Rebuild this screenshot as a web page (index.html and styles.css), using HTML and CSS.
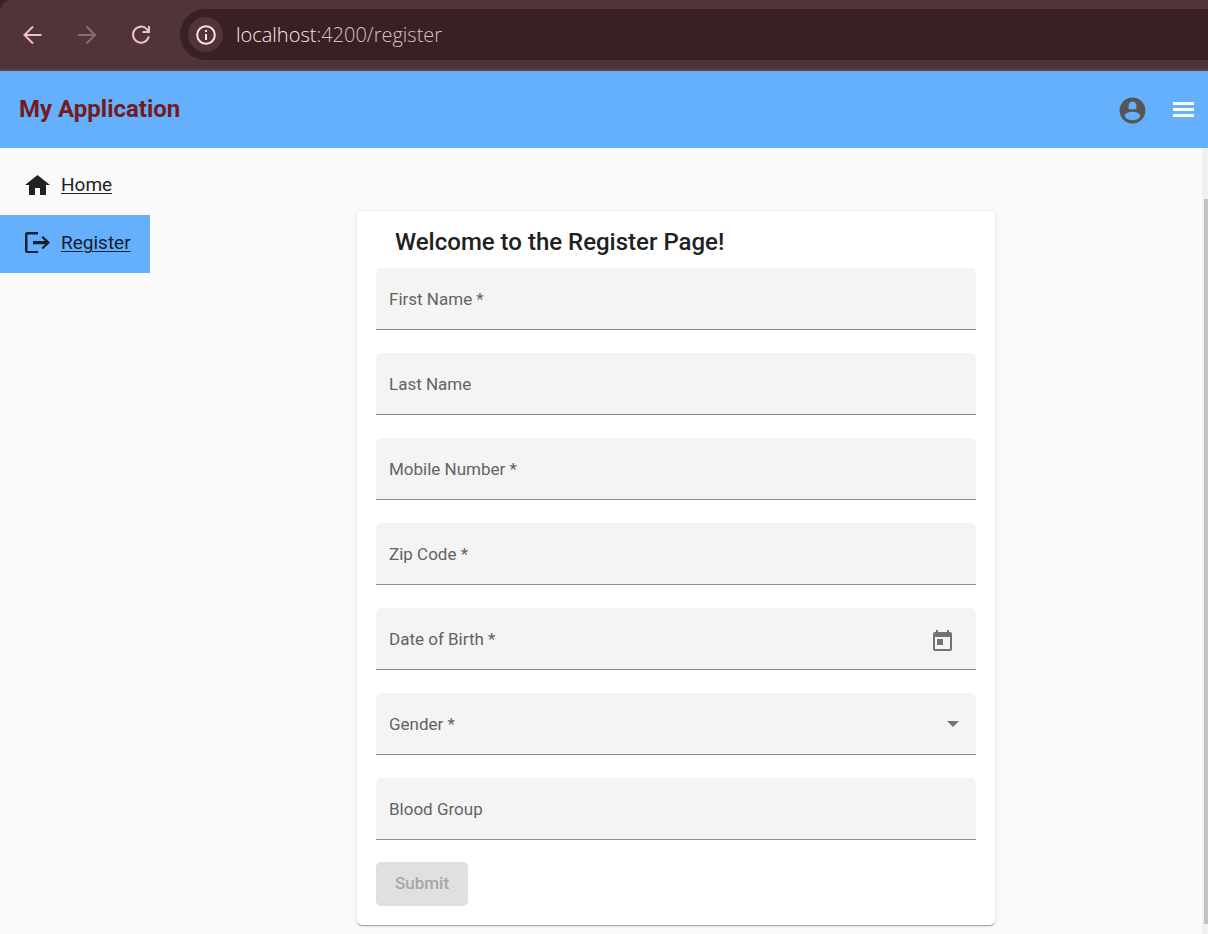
FILE: index.html
```html
<!DOCTYPE html>
<html lang="en">
<head>
<meta charset="utf-8">
<meta name="viewport" content="width=device-width, initial-scale=1">
<title>My Application</title>
<link rel="stylesheet" href="styles.css">
</head>
<body>
<div class="frame">
  <div class="browser">
    <button class="browser-btn" type="button" aria-label="Back">
      <svg viewBox="0 0 20 20" width="20" height="20"><path d="M18.500 10H2M10 1.500L1.500 10l8.500 8.500"/></svg>
    </button>
    <button class="browser-btn browser-btn-dim" type="button" aria-label="Forward">
      <svg viewBox="0 0 20 20" width="20" height="20"><path d="M1 10h16.500M9.500 1.500L18 10l-8.500 8.500"/></svg>
    </button>
    <button class="browser-btn" type="button" aria-label="Reload">
      <svg viewBox="0 0 20 20" width="20" height="20"><path d="M17.800 11.500a8 8 0 1 1-1.800-7.200L18 6.500M18 1v6h-6.500"/></svg>
    </button>
    <div class="address">
      <button class="site-info" type="button" aria-label="Site information">
        <svg viewBox="0 0 20 20" width="20" height="20"><circle cx="10" cy="10" r="8.800"/><path d="M10 9v6M10 5v2"/></svg>
      </button>
      <span class="url"><span class="url-host">localhost</span>:4200/register</span>
    </div>
  </div>

  <header class="topbar">
    <h1 class="brand">My Application</h1>
    <div class="topbar-actions">
      <button class="icon-btn account" type="button" aria-label="Account">
        <svg viewBox="0 0 24 24" width="31" height="31"><path d="M12 2C6.480 2 2 6.480 2 12s4.480 10 10 10 10-4.480 10-10S17.520 2 12 2zm0 3c1.660 0 3 1.340 3 3v3H9V8c0-1.660 1.340-3 3-3zm0 14.500c-3.100 0-6-1.500-6-3.600 0-1.900 3.600-2.900 6-2.900s6 1 6 2.900c0 2.100-2.900 3.600-6 3.600z"/></svg>
      </button>
      <button class="icon-btn menu" type="button" aria-label="Menu">
        <svg viewBox="0 0 21 15" width="21" height="15"><path d="M0 0h21v3H0zM0 6h21v3H0zM0 12h21v3H0z"/></svg>
      </button>
    </div>
  </header>

  <div class="workspace">
    <nav class="sidenav" aria-label="Main">
      <a class="nav-link" href="#home">
        <svg viewBox="0 0 25 22" width="25" height="22"><path d="M10 21v-7h5v7h6V11h4L12.500 1 0 11h4v10z"/></svg>
        <span>Home</span>
      </a>
      <a class="nav-link nav-link-active" href="#register" aria-current="page">
        <svg viewBox="0 0 25 22" width="25" height="22"><path d="M13 0H2.500Q0 0 0 2.500v16Q0 21 2.500 21H13v-2H2.500V2.500H13zM18 4l-1.500 1.600L20 9H8v3.200h12l-3.500 3.500L18 17.300l7-6.700z"/></svg>
        <span>Register</span>
      </a>
    </nav>

    <main class="content">
      <form class="card">
        <h2 class="card-title">Welcome to the Register Page!</h2>
        <div class="fields">
          <div class="field">
            <label class="field-label" for="first">First Name *</label>
            <input class="field-input" id="first" type="text" required>
          </div>
          <div class="field">
            <label class="field-label" for="last">Last Name</label>
            <input class="field-input" id="last" type="text">
          </div>
          <div class="field">
            <label class="field-label" for="mobile">Mobile Number *</label>
            <input class="field-input" id="mobile" type="tel" required>
          </div>
          <div class="field">
            <label class="field-label" for="zip">Zip Code *</label>
            <input class="field-input" id="zip" type="text" required>
          </div>
          <div class="field">
            <label class="field-label" for="dob">Date of Birth *</label>
            <input class="field-input" id="dob" type="text" required>
            <button class="icon-btn calendar" type="button" aria-label="Open calendar">
              <svg viewBox="0 0 19 21" width="19" height="21"><path d="M17 2h-1V0h-2v2H5V0H3v2H2Q0 2 0 4v15q0 2 2 2h15q2 0 2-2V4q0-2-2-2zm0 17H2V7h15zM4 9h6v6H4z"/></svg>
            </button>
          </div>
          <div class="field">
            <label class="field-label" for="gender">Gender *</label>
            <select class="field-input" id="gender" required>
              <option value="" selected></option>
              <option value="f">Female</option>
              <option value="m">Male</option>
            </select>
            <svg class="arrow" viewBox="0 0 12 6" width="12" height="6"><path d="M0 0h12L6 6z"/></svg>
          </div>
          <div class="field">
            <label class="field-label" for="blood">Blood Group</label>
            <input class="field-input" id="blood" type="text">
          </div>
        </div>
        <button class="submit" type="submit" disabled>Submit</button>
      </form>
    </main>

    <div class="scroll-track" aria-hidden="true"><div class="scroll-thumb"></div></div>
  </div>
</div>
</body>
</html>
```
FILE: styles.css
```css
* { box-sizing: border-box; }

body {
  margin: 0;
  background: #fafafa;
  color: #212121;
  font-family: Roboto, "Liberation Sans", sans-serif;
}

button {
  padding: 0;
  border: 0;
  background: none;
  font-family: inherit;
}

svg { display: block; fill: currentColor; }

.frame {
  display: flex;
  flex-direction: column;
  min-height: 100vh;
  background: linear-gradient(#382024 0 16px, transparent 16px);
}

/* Browser toolbar */
.browser {
  display: flex;
  align-items: center;
  gap: 34px;
  height: 71px;
  padding-left: 23px;
  border-bottom: 2px solid #5c4445;
  border-top-left-radius: 12px;
  background: #513439;
}

.browser-btn { color: #f0c0c8; }
.browser-btn-dim { color: #8c6d72; }

.browser-btn svg,
.site-info svg {
  fill: none;
  stroke: currentColor;
  stroke-width: 2;
}

.address {
  display: flex;
  flex: 1;
  align-items: center;
  gap: 13px;
  height: 51px;
  margin-left: -5px;
  padding-left: 8px;
  border-radius: 26px 0 0 26px;
  background: #382024;
}

.site-info {
  display: grid;
  place-items: center;
  width: 35px;
  height: 35px;
  border-radius: 50%;
  background: #513439;
  color: #fbe4e6;
}

.url {
  color: #d6c2c4;
  font-family: "Open Sans", "Noto Sans", sans-serif;
  font-size: 20px;
  font-weight: 300;
  line-height: 28px;
}

.url-host { color: #fbe8ea; }

/* Application bar */
.topbar {
  display: flex;
  align-items: center;
  justify-content: space-between;
  height: 77px;
  padding: 0 14px 0 19px;
  background: #64b0fc;
}

.brand {
  margin: 0;
  padding-bottom: 2px;
  color: #731b1e;
  font-size: 24px;
  font-weight: 700;
  line-height: 32px;
}

.topbar-actions { display: flex; align-items: center; gap: 25px; }
.account { padding-top: 1px; color: #555; }
.menu { color: #fff; }

/* Page body */
.workspace { display: flex; flex: 1; }

.sidenav { width: 150px; padding-top: 9px; }

.nav-link {
  display: flex;
  align-items: center;
  gap: 11px;
  height: 58px;
  padding: 0 0 2px 25px;
  color: #212121;
  font-size: 19px;
  line-height: 28px;
  text-decoration-thickness: 1px;
  text-underline-offset: 2px;
}

.nav-link-active { background: #64b0fc; color: #14202c; }

.content {
  flex: 1;
  min-width: 0;
  padding: 63px 19px 9px;
}

.card {
  max-width: 638px;
  margin: 0 auto;
  padding: 15px 19px 19px;
  border-radius: 5px;
  background: #fff;
  box-shadow: 0 2px 1px -1px rgba(0, 0, 0, .2), 0 1px 1px rgba(0, 0, 0, .14), 0 1px 4px rgba(0, 0, 0, .12);
}

.card-title {
  margin: 0 0 10px;
  padding-left: 19px;
  font-size: 24px;
  font-weight: 500;
  line-height: 32px;
}

.fields { display: grid; gap: 23px; }

.field {
  display: grid;
  grid-template-columns: 1fr auto;
  align-items: center;
  height: 62px;
  border-bottom: 1px solid #8c8c8c;
  border-radius: 5px 5px 0 0;
  background: #f4f4f4;
}

.field-label {
  grid-area: 1 / 1;
  z-index: 1;
  padding: 0 13px;
  color: #636363;
  font-size: 17px;
  line-height: 24px;
  pointer-events: none;
}

.field-input {
  grid-area: 1 / 1 / 2 / 3;
  width: 100%;
  height: 100%;
  padding: 0 13px;
  border: 0;
  background: none;
  color: inherit;
  font: inherit;
  outline: 0;
  appearance: none;
}

.calendar {
  grid-area: 1 / 2;
  z-index: 1;
  margin-right: 24px;
  padding-top: 4px;
  color: #737373;
}

.arrow {
  grid-area: 1 / 2;
  margin-right: 17px;
  color: #737373;
  pointer-events: none;
}

.submit {
  display: block;
  height: 44px;
  margin-top: 22px;
  padding: 0 19px 2px;
  border-radius: 5px;
  background: #e0e0e0;
  color: #a6a6a6;
  font-size: 17px;
  font-weight: 500;
}

/* Scroll indicator */
.scroll-track {
  display: flex;
  width: 6px;
  padding: 51px 0 10px 2px;
  background: #f1f1f1;
}

.scroll-thumb { flex: 1; background: #c1c1c1; }
```
